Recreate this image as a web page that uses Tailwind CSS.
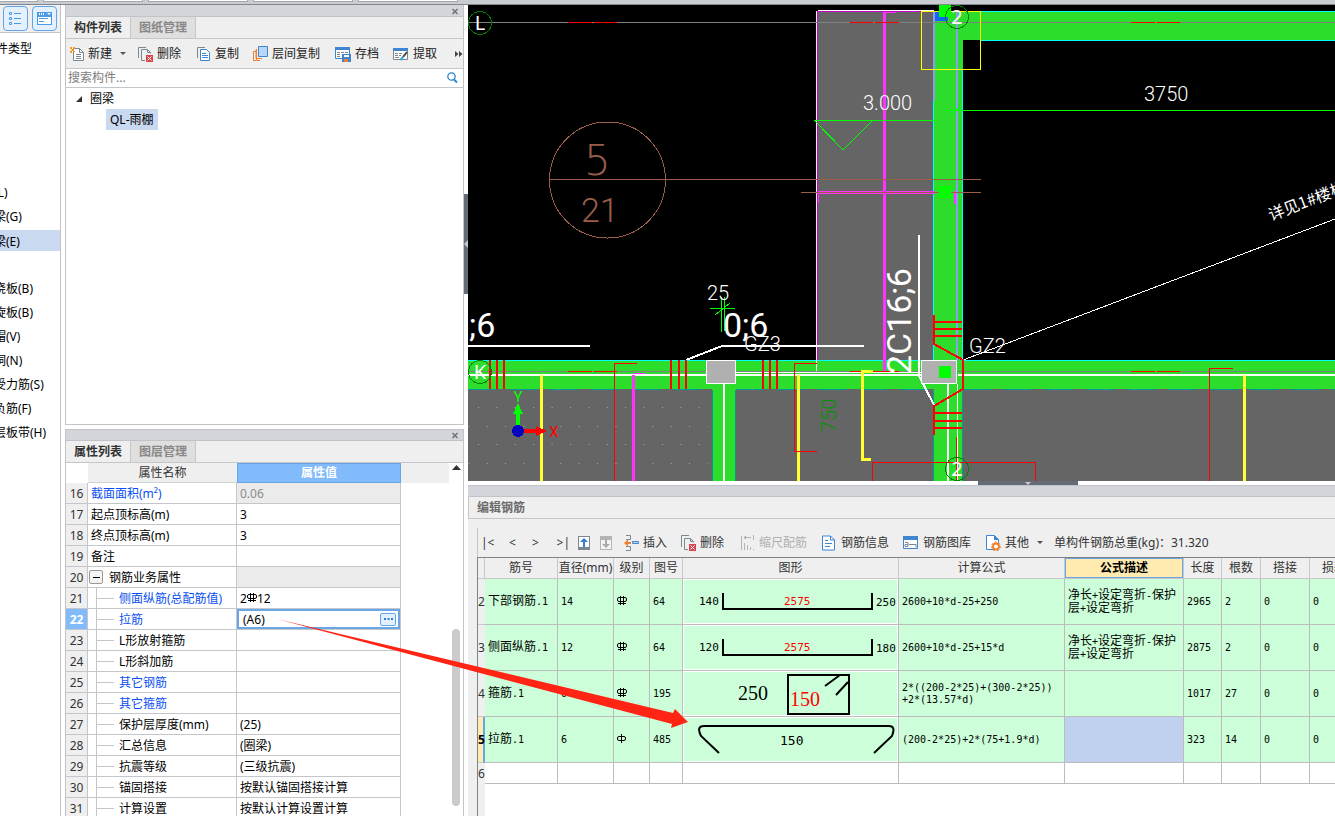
<!DOCTYPE html>
<html lang="zh-CN">
<head>
  <meta charset="UTF-8">
  <meta name="viewport" content="width=device-width, initial-scale=1.0">
  <title>编辑钢筋</title>
  <script src="https://cdn.jsdelivr.net/npm/@tailwindcss/browser@4"></script>
</head>
<body class="relative h-screen overflow-hidden flex flex-col bg-white text-black text-[12px] leading-[20px] font-['Noto_Sans','Noto_Sans_CJK_SC',sans-serif]">

  <!-- 顶部功能区底边 -->
  <div class="h-[5px] shrink-0 flex gap-[5px] bg-[#c9ccd0] border-b border-[#83888e]">
    <div class="w-[38px] h-[2px] bg-white border-b border-r border-[#a5a8ac]"></div>
    <div class="w-[100px] h-[2px] bg-white border-b border-x border-[#a5a8ac]"></div>
    <div class="w-[100px] h-[2px] bg-white border-b border-x border-[#a5a8ac]"></div>
    <div class="w-[100px] h-[2px] bg-white border-b border-x border-[#a5a8ac]"></div>
    <div class="w-[100px] h-[2px] bg-white border-b border-x border-[#a5a8ac]"></div>
  </div>

  <div class="flex flex-1 min-h-0">
    <!-- 构件类型 -->
    <aside class="w-[61px] shrink-0 border-r border-[#c3c3c8] overflow-hidden whitespace-nowrap">
      <div class="h-7 pl-[3px] pt-px flex gap-1 bg-[#efefef] border-b border-[#c3c3c8]">
        <button aria-label="列表" class="size-[25px] rounded border border-[#5ea6ee] bg-[#e4f0fd] grid place-items-center">
          <svg width="15" height="15" viewBox="0 0 15 15" fill="none" stroke="#4a9ae8"><path d="M1.500 1.500h2v2h-2zM1.500 6.500h2v2h-2zM1.500 11.500h2v2h-2zM6 2.500h7M6 7.500h7M6 12.500h7"/></svg>
        </button>
        <button aria-label="窗口" class="size-[25px] rounded border border-[#5ea6ee] bg-[#e4f0fd] grid place-items-center">
          <svg width="15" height="15" viewBox="0 0 15 15"><path fill="#4a9ae8" d="M0 1h15v13H0z"/><path fill="#fff" d="M1 6h13v7H1zM2 2h1v2H2zM4 2h1v2H4zM6 2h1v2H6zM10 2h4l-2 2z"/><path fill="#4a9ae8" d="M2 7h9v1H2zM2 10h5v1H2z"/></svg>
        </button>
      </div>
      <div class="h-[30px] leading-[32px] -ml-1">件类型</div>
      <ul class="mt-[118px] leading-6">
        <li class="-indent-1.5">(L)</li>
        <li class="-indent-1.5">梁(G)</li>
        <li class="-indent-1.5 h-6 pt-px"><div class="bg-[#c9d9f0] leading-[19px] pt-0.5">梁(E)</div></li>
        <li class="h-6"></li>
        <li class="-indent-1.5">浇板(B)</li>
        <li class="-indent-1.5">旋板(B)</li>
        <li class="-indent-1.5">帽(V)</li>
        <li class="-indent-1.5">洞(N)</li>
        <li class="-indent-1.5">受力筋(S)</li>
        <li class="-indent-1.5">负筋(F)</li>
        <li class="-indent-1.5">层板带(H)</li>
      </ul>
    </aside>

    <div class="w-[399px] ml-1 shrink-0 flex flex-col">
      <!-- 构件列表 -->
      <section class="h-[420px] shrink-0 flex flex-col border-x border-b border-[#c3c3c8]">
        <div class="h-3 shrink-0 bg-[#d4d5da] border-b border-[#c0c3c8] flex justify-end items-center pr-1">
          <button aria-label="关闭"><svg width="8" height="8" viewBox="0 0 8 8" stroke="#6f7378" stroke-width="1.500"><path d="M1.500 2l5 5M6.500 2l-5 5"/></svg></button>
        </div>
        <div class="h-[22px] shrink-0 flex bg-[#efefef] border-b border-[#c3c7cc] font-bold">
          <button class="w-[65px] border-r border-[#c3c7cc] text-[#333]">构件列表</button>
          <button class="w-[65px] bg-[#dfdfdf] border-r border-[#c3c7cc] text-[#888]">图纸管理</button>
        </div>
        <div class="h-[30px] shrink-0 flex items-center pl-1 bg-[#efefef] border-b border-[#c3c7cc] text-[#222] whitespace-nowrap">
          <button class="flex items-center gap-1 w-[68px]">
            <svg width="14" height="16" viewBox="0 0 14 16" fill="none"><path stroke="#7b8791" fill="#fff" d="M3.500 2.500h6l4 4v8h-10z"/><path stroke="#7b8791" d="M9.500 2.500v4h4M6 8.500h5M6 10.500h5M6 12.500h5"/><path fill="#f59a23" d="M0 1h2v2H0zM3 1h2v2H3zM1.500 3h2v2h-2zM0 5h2v2H0zM3 5h2v1H3z"/></svg>
            新建<svg class="ml-1" width="6" height="4"><path fill="#555" d="M0 0h6L3 3z"/></svg>
          </button>
          <button class="flex items-center gap-1 w-[59px]">
            <svg width="15" height="16" viewBox="0 0 15 16" fill="none"><path stroke="#7b8791" d="M.5 12V1.500H8M3.500 14.500v-11h6l3 3v1M3.500 14.500H7M9.500 3.500v3h3"/><path fill="#d9434b" d="M8 9h7v7H8z"/><path stroke="#fff" d="M9.500 10.500l4 4M13.500 10.500l-4 4"/></svg>
            删除
          </button>
          <button class="flex items-center gap-1 w-[56px]">
            <svg width="14" height="16" viewBox="0 0 14 16" fill="none"><path stroke="#7b8791" d="M.5 12V1.500H8"/><path stroke="#3f85cf" fill="#fff" d="M3.500 3.500h6l3 3v8h-9z"/><path stroke="#3f85cf" d="M5 7.500h4M5 9.500h6M5 11.500h6"/></svg>
            复制
          </button>
          <button class="flex items-center gap-1 w-[82px]">
            <svg width="15" height="16" viewBox="0 0 15 16" fill="none"><path stroke="#f08030" d="M3 5.500H.5v9H3M3 3.500v9h6M3.500 3v11.500H7"/><path stroke="#3f85cf" fill="#b8d7fa" d="M5.500.500h9v10h-9z"/></svg>
            层间复制
          </button>
          <button class="flex items-center gap-1 w-[58px]">
            <svg width="16" height="16" viewBox="0 0 16 16" fill="none"><path stroke="#3f85cf" fill="#fff" d="M.5 1.500h14v11H.5z"/><path fill="#3f85cf" d="M0 1h15v3H0z"/><path stroke="#7b8791" d="M2 6.500h3M6 6.500h3M10 6.500h3M2 8.500h3M2 10.500h3"/><path fill="#3f85cf" d="M7 8h9v8H7z"/><path fill="#fff" d="M9 9h5v2H9z"/><path fill="#f08030" d="M9 13h4v3H9z"/></svg>
            存档
          </button>
          <button class="flex items-center gap-1 w-[62px]">
            <svg width="16" height="16" viewBox="0 0 16 16" fill="none"><path stroke="#7b8791" fill="#fff" d="M.5 3.500h14v10H.5z"/><path fill="#3f85cf" d="M0 2h15v3H0z"/><path stroke="#7b8791" d="M2 7.500h3M6 7.500h3M2 9.500h3M6 9.500h2M2 11.500h4"/><path stroke="#444" stroke-width="2" d="M14 6l-4 5"/><path stroke="#29a9d8" stroke-width="2" d="M10 11l-2.500 3"/></svg>
            提取
          </button>
          <button aria-label="更多"><svg width="8" height="8"><path fill="#444" d="M0 1l3.500 3L0 7zM4 1l3.500 3L4 7z"/></svg></button>
        </div>
        <label class="h-[19px] shrink-0 flex items-center pl-0.5 pr-[5px] border-b border-[#c3c7cc]">
          <input type="text" aria-label="搜索构件" placeholder="搜索构件..." class="flex-1 outline-none leading-4 placeholder:text-[#7d7d7d]">
          <svg width="11" height="12" viewBox="0 0 11 12" fill="none" stroke="#2c86c8"><circle cx="4.500" cy="4.500" r="3.700" stroke-width="1.300"/><path stroke-width="2" d="M7 7.500l3 3"/></svg>
        </label>
        <ul class="flex-1">
          <li class="flex items-center h-[21px] pl-[10px] gap-2"><svg width="6" height="6"><path fill="#333" d="M6 0v6H0z"/></svg>圈梁</li>
          <li class="pl-10"><span class="inline-block h-[21px] leading-[21px] px-1 bg-[#c9d9f0]">QL-雨棚</span></li>
        </ul>
      </section>

      <!-- 属性列表 -->
      <section class="mt-1 flex-1 min-h-0 flex flex-col border-x border-t border-[#c3c3c8]">
        <div class="h-[11px] shrink-0 bg-[#d4d5da] border-b border-[#c0c3c8] flex justify-end items-center pr-1">
          <button aria-label="关闭"><svg width="8" height="8" viewBox="0 0 8 8" stroke="#6f7378" stroke-width="1.500"><path d="M1.500 2l5 5M6.500 2l-5 5"/></svg></button>
        </div>
        <div class="h-[22px] shrink-0 flex bg-[#efefef] border-b border-[#c3c7cc] font-bold">
          <button class="w-[65px] border-r border-[#c3c7cc] text-[#333]">属性列表</button>
          <button class="w-[65px] bg-[#dfdfdf] border-r border-[#c3c7cc] text-[#888]">图层管理</button>
        </div>
        <div class="flex flex-1 min-h-0">
          <div class="w-[383px] overflow-hidden">
            <table class="w-full table-fixed border-separate border-spacing-0">
              <colgroup><col class="w-[22px]"><col class="w-[149px]"><col class="w-[164px]"><col></colgroup>
              <thead>
                <tr class="h-5 bg-[#efefef] text-[#333]">
                  <th class="bg-white"></th>
                  <th class="p-0 h-5 leading-[19px] font-normal border-b border-[#cfd2d6]">属性名称</th>
                  <th class="p-0 h-5 leading-[18px] font-bold text-white bg-[#82bbfb] border border-[#6aa5e6]">属性值</th>
                  <th></th>
                </tr>
              </thead>
              <tbody id="props"></tbody>
            </table>
          </div>
          <div class="flex-1 relative">
            <svg class="absolute left-[3px] top-[2px]" width="9" height="5"><path fill="#333" d="M0 5h9L4.500 0z"/></svg>
            <div class="absolute left-[3px] top-[166px] w-2 h-[177px] rounded-full bg-[#cbcbcb]"></div>
          </div>
        </div>
      </section>
    </div>

    <!-- 竖向分隔条 -->
    <div class="w-1 shrink-0 pt-[189px]">
      <div class="h-[100px] bg-[#646c76] flex items-center"><svg width="4" height="8"><path fill="#c4c8cc" d="M4 0v8L0 4z"/></svg></div>
    </div>

    <div class="flex-1 min-w-0 flex flex-col">
      <!-- 绘图区 -->
      <svg class="block w-full h-[476px] shrink-0 bg-black" viewBox="468 5 867 476" preserveAspectRatio="xMinYMin slice" shape-rendering="crispEdges" fill="none">
        <defs>
          <pattern id="dots" x="478" y="407" width="18.400" height="37" patternUnits="userSpaceOnUse"><path fill="#aaa" d="M0 0h1v1H0zM9 19h1v1H9z"/></pattern>
        </defs>
        <!-- 板 -->
        <path fill="#656565" d="M468 389h867v92H468zM817 11h117v350H817z"/>
        <path fill="url(#dots)" d="M468 400h240v81H468z"/>
        <!-- 梁 -->
        <path fill="#2cdd2c" d="M468 360h867v29H468zM934 11h29v470h-29zM963 11h372v29H963zM712 389h24v92h-24z"/>
        <path stroke="#00ffff" d="M468 360.500h465M963 360.500h372M980 11.500h355M980 40.500h355M933.500 70v290M962.500 69v291"/>
        <path stroke="#8c9cf0" stroke-width="2" d="M934 11v90M957 12v349"/>
        <path stroke="#009a9a" d="M712.500 390v91M735.500 390v91M933.500 390v91M962.500 390v91"/>
        <path stroke="#009a9a" stroke-dasharray="28 13" d="M468 389.500h245M736 389.500h197M963 389.500h372"/>
        <!-- 上部轴线 -->
        <path stroke="#fff" d="M816.500 11v361M818 10.500h116"/>
        <path stroke="#c800c8" d="M817.500 11v349M817 11.500h117"/>
        <path stroke="#ff32ff" stroke-width="3" d="M884.500 12v359"/>
        <path stroke="#ff32ff" d="M884 12.500h12M818 191.500h117M818 193.500h117M818.500 193v10M954.500 191v13M955.500 191v13"/>
        <path stroke="#808080" d="M468 22.500h867M468 371.500h867"/>
        <path stroke="#f00" d="M568 22.500h24M594 22.500h23M850 22.500h23M875 22.500h24M1131 22.500h24M1157 22.500h23M568 371.500h24M594 371.500h23M850 371.500h49M1131 371.500h24M1157 371.500h23"/>
        <path fill="#1464ff" d="M935 12h13v9h-13z"/>
        <path stroke="#ffff00" d="M921.500 11.500h59v58h-59z"/>
        <!-- 索引符号 -->
        <g stroke="#9b5d4b"><circle cx="607.500" cy="180" r="58"/><path d="M549 179.500h432M801 192.500h180"/></g>
        <path fill="#00ff00" d="M939 5h12v12h-12zM939 186h12v12h-12z"/>
        <!-- 标高与尺寸线 -->
        <path stroke="#00ff00" d="M814 120.500h122M815 121l28 29 29-29M945 110.500h390M951 115l11-10M710 308.500h25M721.500 297v35M724.500 297v34M715 315l15-12"/>
        <!-- 白线 -->
        <path stroke="#fff" stroke-width="2" d="M468 375h453M958 375h377M468 346h122M722 346h142M686 360l36-14M919 235v142M919 376l15 29M948 384v97M724 384v97"/>
        <path stroke="#fff" d="M736 372.500h185M957.500 384v97M963 360l372-141"/>
        <path stroke="#ffff32" stroke-width="3" d="M541.500 375v106M798.500 375v106M873 371.500h-10.500v88h8M1244.500 375v106"/>
        <path stroke="#ff32ff" stroke-width="3" d="M633.500 375v106"/>
        <path stroke="#ff32ff" d="M633 373.500h12"/>
        <path stroke="#f00" stroke-width="2" d="M490 360v29M497 360v29M504 360v29M671 360v29M679 360v29M686 360v29M763 360v29M770 360v29M777 360v29M934 315v29l29 16v29l-29 17v29M935 322h27M935 329h27M935 336h27M935 413h27M935 421h27M935 428h27"/>
        <path stroke="#f00" d="M637 363.500h-22.500V481M817 363.500h-22.500v88H817M1233 368.500h-23.500V481M872.500 481v-18.500h163V481M956.500 437v44"/>
        <!-- 柱 -->
        <path fill="#b0b0b0" stroke="#fff" d="M706.500 360.500h29v23h-29zM921.500 360.500h35v23h-35z"/>
        <path fill="#00ff00" d="M939 366h12v12h-12z"/>
        <!-- 轴号 -->
        <g stroke="#008000"><circle cx="480" cy="23" r="11.500"/><circle cx="957" cy="17" r="11.500"/><circle cx="480" cy="372" r="11.500"/><circle cx="957" cy="469" r="11.500"/></g>
        <g fill="#fff" text-anchor="middle" class="text-[20px] font-['Noto_Sans',sans-serif]">
          <text x="480" y="30">L</text><text x="480" y="379">K</text><text x="957" y="24">2</text><text x="957" y="476">2</text>
        </g>
        <!-- 坐标轴 -->
        <path fill="#00ff00" d="M516 425v-11h-3l5-11 5 11h-3v11z"/>
        <path fill="#f00" d="M524 429h12v-3l11 5-11 5v-3h-12z"/>
        <circle cx="518" cy="431" r="6" fill="#0000c0"/>
        <g text-anchor="middle" class="text-[15px] font-['Roboto',sans-serif]"><text x="518" y="402" fill="#00ff00">Y</text><text x="554" y="437" fill="#f00">X</text></g>
        <!-- 标注文字 -->
        <g fill="#9b5d4b" class="font-extralight font-['DejaVu_Sans',sans-serif]"><text x="584" y="175" class="text-[42px]">5</text><text x="581" y="222" class="text-[34px] font-light font-['Roboto',sans-serif]">21</text></g>
        <g fill="#fff" class="text-[20px] font-light font-['Roboto',sans-serif]">
          <text x="863" y="110">3.000</text><text x="1144" y="101">3750</text><text x="707" y="300">25</text><text x="744" y="351">GZ3</text><text x="969" y="353">GZ2</text>
        </g>
        <g fill="#fff" class="text-[34px] font-['Roboto',sans-serif]"><text x="469" y="337">;6</text><text x="723" y="337">0;6</text><text transform="translate(911 374) rotate(-90)">2C16;6</text></g>
        <text transform="translate(836 432) rotate(-90)" fill="#009600" class="text-[20px] font-light font-['Roboto',sans-serif]">750</text>
        <text transform="translate(1271 221) rotate(-21)" fill="#fff" class="text-[16px] font-['Noto_Sans_CJK_SC',sans-serif]">详见1#楼梯</text>
      </svg>

      <!-- 横向分隔条 -->
      <div class="h-1 shrink-0 flex pl-[510px]">
        <div class="w-[100px] bg-[#646c76] grid place-items-center"><svg width="6" height="3"><path fill="#c4c8cc" d="M0 0h6L3 3z"/></svg></div>
      </div>

      <!-- 编辑钢筋 -->
      <section class="flex-1 min-h-0 flex flex-col bg-[#efefef]">
        <div class="h-3 shrink-0 bg-[#d4d5da] border-y border-[#c0c3c8]"></div>
        <h2 class="h-[22px] shrink-0 pl-2 leading-[21px] font-bold text-[#6b6b6b] border-l border-b border-[#c3c7cc]">编辑钢筋</h2>
        <div class="ml-[9px] mt-[9px] h-[29px] shrink-0 flex items-center pl-[3px] border-l border-[#c3c7cc] text-[#333] whitespace-nowrap">
          <button class="w-5 text-left">|&lt;</button>
          <button class="w-[23px]">&lt;</button>
          <button class="w-[23px]">&gt;</button>
          <button class="w-[23px] text-right">&gt;|</button>
          <button aria-label="上移" class="ml-1 px-1"><svg width="12" height="14" viewBox="0 0 12 14"><path fill="#7b8791" d="M0 0h12v14H0z"/><path fill="#fff" d="M1 1h10v10H1z"/><path fill="#2f7fd3" d="M5 11V6H2l4-4 4 4H7v5z"/></svg></button>
          <button aria-label="下移" class="ml-0.5 px-1"><svg width="12" height="14" viewBox="0 0 12 14"><path fill="#b4b4b4" d="M0 0h12v14H0z"/><path fill="#f4f4f4" d="M1 4h10v9H1z"/><path fill="#aaa" d="M5 3v5H2l4 4 4-4H7V3z"/></svg></button>
          <button class="flex items-center gap-1 ml-2 w-[57px]">
            <svg width="15" height="16" viewBox="0 0 15 16" fill="none"><path stroke="#7b8791" d="M2 .5h4.500v4H2M2 15.500h4.500v-4H2"/><path stroke="#3f85cf" fill="#b8d7fa" d="M8.500 6.500h6v2h-6z"/><path fill="#f08030" d="M0 8l4-3.500V7h3v2H4v2.500z"/></svg>
            插入
          </button>
          <button class="flex items-center gap-1 w-[60px]">
            <svg width="15" height="16" viewBox="0 0 15 16" fill="none"><path stroke="#7b8791" d="M.5 12V.5H8M3.500 14.500v-11h6l3 3v1M3.500 14.500H7M9.500 3.500v3h3"/><path fill="#d9434b" d="M8 9h7v7H8z"/><path stroke="#fff" d="M9.500 10.500l4 4M13.500 10.500l-4 4"/></svg>
            删除
          </button>
          <button disabled class="flex items-center gap-1 w-[81px] text-[#b0b0b0]">
            <svg width="14" height="16" viewBox="0 0 14 16" stroke="#b4b4b4"><path d="M.5 1v14M3.500 8v7M6.500 10v5M9.500 12v3M12.500 14v1M3 2.500h7M12.500 0v5M5 1L3 2.500 5 4"/></svg>
            缩尺配筋
          </button>
          <button class="flex items-center gap-[5px] w-[81px]">
            <svg width="14" height="16" viewBox="0 0 14 16" fill="none" stroke="#3f85cf"><path fill="#fff" d="M.5 1h8l4 4v10H.5z"/><path d="M8.500 1v4h4M3 5.500h3M3 8.500h7M3 11.500h5"/></svg>
            钢筋信息
          </button>
          <button class="flex items-center gap-[5px] w-[83px]">
            <svg width="15" height="14" viewBox="0 0 15 14" fill="none"><path stroke="#3f85cf" fill="#fff" d="M.5.500h14v12H.5z"/><path fill="#3f85cf" d="M0 0h15v4H0z"/><path stroke="#7b8791" d="M2 6.500h3v4H2v-2h3M6 8.500h7v3"/></svg>
            钢筋图库
          </button>
          <button class="flex items-center gap-1 w-[68px]">
            <svg width="15" height="16" viewBox="0 0 15 16" fill="none"><path stroke="#3f85cf" fill="#fff" d="M.5.500h8l4 4v10H.5z"/><path fill="#3f85cf" d="M8 0l5 5H8z"/><circle cx="10" cy="11.500" r="3" fill="#fff" stroke="#f08030" stroke-width="2"/><path stroke="#f08030" stroke-dasharray="2 2" d="M5.500 11.500a4.500 4.500 0 109 0 4.500 4.500 0 10-9 0"/></svg>
            其他<svg class="ml-1" width="6" height="4"><path fill="#555" d="M0 0h6L3 3z"/></svg>
          </button>
          <span>单构件钢筋总重(kg)：31.320</span>
        </div>
        <div class="ml-[9px] flex-1 flex flex-col overflow-hidden border-l border-t border-[#7f8388] bg-white">
          <table class="w-[881px] shrink-0 table-fixed border-separate border-spacing-0">
            <colgroup>
              <col class="w-[7px]"><col class="w-[73px]"><col class="w-[56px]"><col class="w-[36px]"><col class="w-[33px]"><col class="w-[216px]"><col class="w-[166px]"><col class="w-[119px]"><col class="w-[38px]"><col class="w-[39px]"><col class="w-[49px]"><col class="w-[49px]">
            </colgroup>
            <thead>
              <tr class="h-[21px] bg-[#efefef] text-[#333] whitespace-nowrap *:p-0 *:h-[21px] *:font-normal *:border-b *:border-r *:border-[#c8c8c8]">
                <th></th><th>筋号</th><th>直径(mm)</th><th>级别</th><th>图号</th><th>图形</th><th>计算公式</th>
                <th class="bg-[#ffeab0] shadow-[inset_0_0_0_1px_#6aa5e6]"><b class="text-black">公式描述</b></th>
                <th>长度</th><th>根数</th><th>搭接</th><th>损耗</th>
              </tr>
            </thead>
            <tbody id="bars"></tbody>
          </table>
          <div class="w-[7px] flex-1 bg-[#efefef]"></div>
        </div>
      </section>
    </div>
  </div>

  <!-- 红色指示箭头 -->
  <svg class="absolute left-[277px] top-[610px] pointer-events-none" width="412" height="120" viewBox="277 610 412 120">
    <path fill="#ff2413" d="M277 619l396 94 2-4 13 13-17 6 1-4z"/>
  </svg>

  <script>
    // 钢筋级别符号
    const grade3 = '<svg class="inline-block align-baseline" width="10" height="11" viewBox="0 0 10 11" fill="none" stroke="#000"><rect x=".5" y="2.500" width="9" height="4" rx="1.500"/><path d="M3.500 1v9M6.500 1v9M1 8.500h8"/></svg>';
    const grade1 = '<svg class="inline-block align-baseline" width="10" height="11" viewBox="0 0 10 11" fill="none" stroke="#000"><rect x=".5" y="3.500" width="8" height="4" rx="1.500"/><path d="M4.500 1v9"/></svg>';

    // 属性行: [序号, 名称, 值, 蓝色名称, 灰底]
    const props = [
      [16, '截面面积(m²)', '0.06', true, true],
      [17, '起点顶标高(m)', '3'],
      [18, '终点顶标高(m)', '3'],
      [19, '备注', ''],
      [20, '钢筋业务属性', '', false, true],
      [21, '侧面纵筋(总配筋值)', '2' + grade3 + '12', true],
      [22, '拉筋', '(A6)', true],
      [23, 'L形放射箍筋', ''],
      [24, 'L形斜加筋', ''],
      [25, '其它钢筋', '', true],
      [26, '其它箍筋', '', true],
      [27, '保护层厚度(mm)', '(25)'],
      [28, '汇总信息', '(圈梁)'],
      [29, '抗震等级', '(三级抗震)'],
      [30, '锚固搭接', '按默认锚固搭接计算'],
      [31, '计算设置', '按默认计算设置计算'],
    ];
    document.getElementById('props').innerHTML = props.map(([no, name, value, blue, gray]) => {
      const active = no === 22;
      let label = `<div class="pl-[3px] pt-0.5">${name}</div>`;
      if (no === 20) {
        label = `<div class="flex items-center gap-1.5 pl-px"><button aria-label="折叠" class="size-[14px] rounded-xs border border-[#999] bg-[#f4f4f4] grid place-items-center"><span class="w-[7px] h-px bg-black"></span></button><span class="pt-0.5">${name}</span></div>`;
      } else if (no > 20) {
        label = `<div class="ml-2 h-5 flex items-center gap-[5px] border-l border-[#c3c7cc]"><span class="w-[17px] h-px bg-[#c3c7cc]"></span><span class="pt-0.5">${name}</span></div>`;
      }
      const cell = active
        ? `<div class="flex items-center h-5 pl-1 pr-0.5 border-2 border-[#6aa5e6]"><input aria-label="${name}" value="${value}" class="flex-1 min-w-0 h-4 pt-px outline-none"><button aria-label="选择" class="w-4 h-[13px] rounded-xs border border-[#5ea6ee] bg-[#e4f0fd] grid place-items-center"><svg width="9" height="2"><path fill="#2f7fd3" d="M0 0h2v2H0zM3.500 0h2v2h-2zM7 0h2v2H7z"/></svg></button></div>`
        : `<div class="pl-[3px] pt-0.5">${value}</div>`;
      return `<tr class="h-[21px] leading-[18px] whitespace-nowrap">
        <td class="p-0 pt-0.5 text-center border-r border-b border-[#c3c7cc] ${active ? 'bg-[#82bbfb] text-white font-bold' : 'bg-[#efefef] text-[#333]'}">${no}</td>
        <td class="p-0 border-r border-b border-[#c3c7cc] ${blue ? 'text-[#0a50f0]' : ''}">${label}</td>
        <td class="p-0 border-r border-b border-[#c3c7cc] ${gray ? 'bg-[#ebebeb] text-[#8c8c8c]' : ''}">${cell}</td>
        <td class="p-0"></td></tr>`;
    }).join('');

    // 钢筋图形
    const shapes = [
      (a, b) => `<path d="M40 14v16h149V14"/><g stroke="none"><text x="16" y="26" fill="#000">${a}</text><text x="101" y="26" fill="#f00">2575</text><text x="193" y="27" fill="#000">${b}</text></g>`,
      () => `<path d="M105 4h61v39h-61zM142 15l15-11M153 24l12-13"/><g stroke="none" class="text-[20px] font-['Liberation_Serif',serif]"><text x="55" y="29" fill="#000">250</text><text x="107" y="35" fill="#f00">150</text></g>`,
      () => `<path d="M36 36L18 19Q13 9 21 9H206Q213 9 209 19L191 36"/><text x="97" y="28" fill="#000" stroke="none" class="text-[13px]">150</text>`,
    ];
    const bars = [
      [2, '下部钢筋', 14, grade3, 64, shapes[0](140, 250), '2600+10*d-25+250', 1, 2965, 2],
      [3, '侧面纵筋', 12, grade3, 64, shapes[0](120, 180), '2600+10*d-25+15*d', 1, 2875, 2],
      [4, '箍筋', 6, grade3, 195, shapes[1](), '2*((200-2*25)+(300-2*25))<br>+2*(13.57*d)', 0, 1017, 27],
      [5, '拉筋', 6, grade1, 485, shapes[2](), '(200-2*25)+2*(75+1.9*d)', 0, 323, 14],
    ];
    const td = 'p-0 pl-[3px] border-r border-b border-[#bcbcbc]';
    document.getElementById('bars').innerHTML = bars.map(([no, name, dia, grade, fig, shape, formula, desc, len, num]) => `
      <tr class="h-[46px] bg-[#ccffd9] whitespace-nowrap text-[10px] leading-[12px] font-['DejaVu_Sans_Mono','Noto_Sans_CJK_SC',monospace]">
        <td class="p-0 border-b border-[#c8c8c8] text-[12px] font-['Noto_Sans',sans-serif] ${no === 5 ? 'bg-[#ffeab0] border-r-2 border-r-[#6aa5e6] font-bold' : 'bg-[#efefef] text-[#333]'}">${no}</td>
        <td class="${td}"><span class="text-[12px]">${name}</span>.1</td>
        <td class="${td}">${dia}</td>
        <td class="${td} pl-1">${grade}</td>
        <td class="${td}">${fig}</td>
        <td class="p-0 border-r border-b border-[#bcbcbc]"><svg class="block w-full h-[45px] border border-white text-[11px]" viewBox="1 1 213 43" fill="none" stroke="#000" stroke-width="2">${shape}</svg></td>
        <td class="${td}">${formula}</td>
        <td class="${td} text-[12px] ${no === 5 ? 'bg-[#c0d1ef]' : ''}">${desc ? '净长<span class="text-[10px]">+</span>设定弯折<span class="text-[10px]">-</span>保护<br>层<span class="text-[10px]">+</span>设定弯折' : ''}</td>
        <td class="${td}">${len}</td>
        <td class="${td}">${num}</td>
        <td class="${td}">0</td>
        <td class="${td}">0</td>
      </tr>`).join('') + `
      <tr class="h-[21px]"><td class="p-0 bg-[#efefef] text-[#333]">6</td>${`<td class="${td}"></td>`.repeat(11)}</tr>`;
  </script>
</body>
</html>
